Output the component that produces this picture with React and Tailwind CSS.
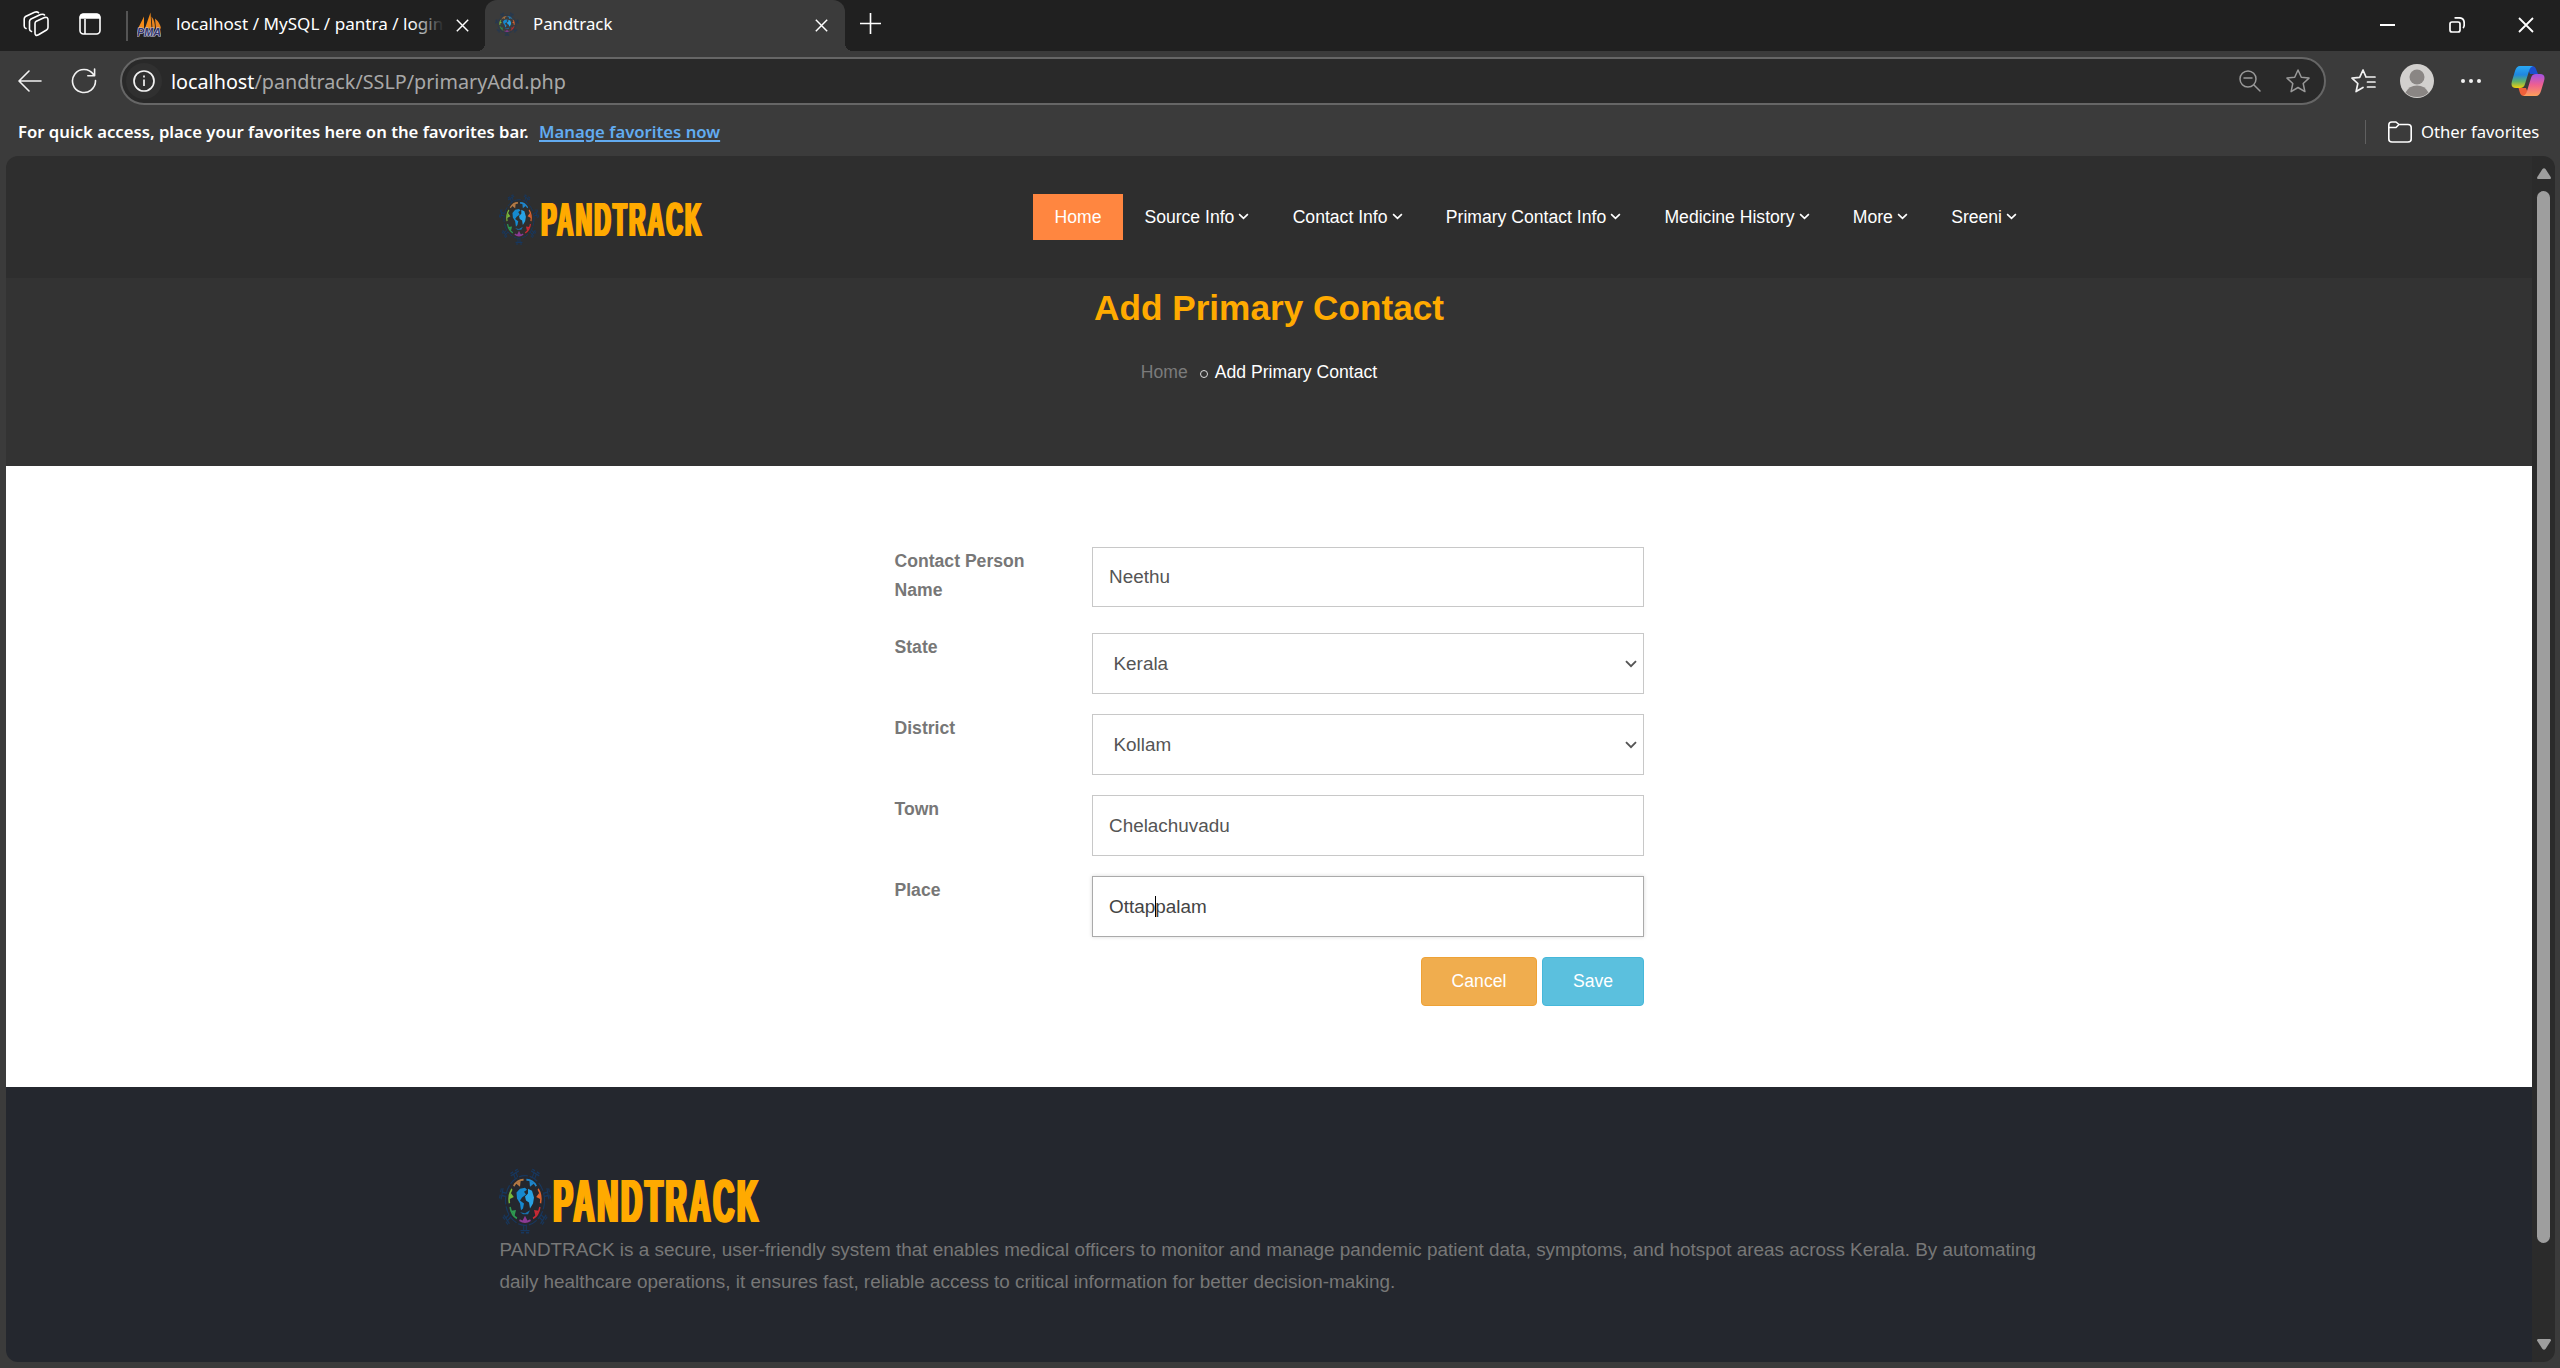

const segments = [
  [180, "#8d3a95"],
  [128.6, "#c92a35"],
  [77.1, "#e0632f"],
  [25.7, "#1f86cc"],
  [-25.7, "#b47a45"],
  [-77.1, "#79b93c"],
  [-128.6, "#2e9a50"],
];

function Virus({ className }) {
  return (
    <svg viewBox="0 0 52 68" preserveAspectRatio="none" className={"shrink-0 " + className}>
      <g fill="none">
        {segments.map(([a]) => (
          <g key={a} transform={`translate(26 34) scale(1 1.3) rotate(${a})`} stroke="#17375e" strokeWidth="1.100">
            <path d="M-1.300 -19.500V-23M1.300 -19.500V-23M-4.500 -23.500H4.500M-4 -25.200H-1M1 -25.200H4" />
          </g>
        ))}
        <ellipse cx="26" cy="34" rx="19.500" ry="25.200" stroke="#17375e" strokeWidth="1.200" strokeDasharray="9 2" />
        {segments.map(([a, color]) => (
          <g key={a} transform={`translate(26 34) scale(1 1.35) rotate(${a})`}>
            <path d="M-5.500 -14.700Q0 -17.500 5.500 -14.700" stroke={color} strokeWidth="1.500" />
            <path d="M-2.600 -15.500L0 -11.500L2.600 -15.500Z" fill={color} />
          </g>
        ))}
      </g>
      <path d="M17.500 26L21 22L26 21L28 23L25 25L27 28L23 31L21 34L25 37L24 42L22 44L21 37L18 32Z" fill="#1689cf" />
      <path d="M29 22L33 24L35 31L34 37L31 42L30 36L27 34L26 30L29 27Z" fill="#28a2e4" />
      <path d="M21 46L26 47L31 44L29 48H24Z" fill="#176fae" />
    </svg>
  );
}

function Chevron({ className }) {
  return (
    <svg viewBox="0 0 12 8" className={className} fill="none" stroke="currentColor" strokeWidth="1.900"><path d="M1 1.200L6 6.200L11 1.200" /></svg>
  );
}

function X({ className }) {
  return (
    <svg viewBox="0 0 16 16" className={className} fill="none" stroke="currentColor" strokeWidth="1.800"><path d="M1 1L15 15M15 1L1 15" /></svg>
  );
}

function TabBar() {
  return (
    <div className="flex h-[51px] bg-[#202020] font-['Noto_Sans',sans-serif] text-white">
      <div className="flex w-[485px] items-center pb-[3px]">
        <svg viewBox="0 0 26 26" className="ml-[23px] h-[26px] w-[26px]" fill="none" stroke="currentColor" strokeWidth="1.600" strokeLinejoin="round" strokeLinecap="round">
          <path d="M12 12.500Q12 11 13.300 10.300L21.500 6.600Q25 5.500 25 9V16.500Q25 18 23.500 19L15.500 23.800Q12 25.500 12 22Z" />
          <path d="M8.500 20.500Q6.500 20 6.500 18V10.500Q6.500 9 8 8L17.500 3.600Q20.500 2.600 21.500 4" />
          <path d="M3 17.500Q1.200 17 1.200 15V8Q1.200 6.500 2.500 5.500L11.500 1.200Q14 .3 15.500 1.700" />
        </svg>
        <svg viewBox="0 0 22 22" className="ml-[30px] h-[22px] w-[22px]" fill="none" stroke="currentColor" strokeWidth="1.600">
          <rect x="1" y="1" width="20" height="20" rx="3.500" />
          <path d="M1.500 4Q1.500 1.500 4 1.500H18Q20.500 1.500 20.500 4V5H1.500Z" fill="currentColor" />
          <path d="M6 6V21" />
        </svg>
        <div className="mt-[4px] ml-[25px] h-[30px] w-[2px] bg-[#545454]" />
        <svg viewBox="0 0 24 24" className="ml-[9px] h-[25px] w-[24px]">
          <path d="M1 16L7 4V16ZM8 16Q11 7 13.500 0L14.500 16Z" fill="#f58b19" />
          <path d="M14.500 4Q18 8 18 16H15.500ZM18 6Q23 10 24 16H19Z" fill="#e88420" />
          <text x="0" y="23.500" textLength="24" lengthAdjust="spacingAndGlyphs" fontSize="10" fontWeight="700" fontStyle="italic" fontFamily="Liberation Sans" fill="#34366e" stroke="#c5c6dc" strokeWidth="1.200" paintOrder="stroke">PMA</text>
        </svg>
        <div className="relative -mt-px ml-[15px] w-[268px] overflow-hidden text-[17.1px] leading-[27px] whitespace-nowrap">
          localhost / MySQL / pantra / login
          <div className="absolute top-0 right-0 h-full w-8 bg-linear-to-r from-transparent to-[#202020]" />
        </div>
        <X className="mt-[3px] ml-[12px] h-[13px] w-[13px]" />
      </div>
      <div className="relative flex h-[51px] w-[360px] items-center rounded-t-[12px] bg-[#3b3b3b] pb-[3px] before:absolute before:bottom-0 before:-left-2 before:h-2 before:w-2 before:bg-[radial-gradient(circle_at_0_0,transparent_8px,#3b3b3b_8px)] after:absolute after:-right-2 after:bottom-0 after:h-2 after:w-2 after:bg-[radial-gradient(circle_at_100%_0,transparent_8px,#3b3b3b_8px)]">
        <Virus className="ml-[10px] h-[24px] w-[24px]" />
        <div className="-mt-px ml-[14px] w-[79px] text-[16.8px] leading-[27px]">Pandtrack</div>
        <X className="mt-[2px] ml-[203px] h-[13px] w-[13px]" />
      </div>
      <svg viewBox="0 0 22 22" className="mt-[13px] ml-[15px] h-[21px] w-[21px]" stroke="currentColor" strokeWidth="1.700"><path d="M11 0V22M0 11H22" /></svg>
      <div className="mr-[26px] ml-auto flex items-center pb-px">
        <div className="mr-[54px] h-[2px] w-[15px] bg-white" />
        <svg viewBox="0 0 16 16" className="mr-[53px] h-[16px] w-[16px]" fill="none" stroke="currentColor" strokeWidth="1.700"><rect x="1" y="5" width="10" height="10" rx="2" /><path d="M5.500 1Q6.500 .8 8 .8H10Q15.200 .8 15.200 6V8Q15.200 10 14 11" /></svg>
        <X className="h-[16px] w-[16px]" />
      </div>
    </div>
  );
}

function Toolbar() {
  return (
    <div className="flex h-[59px] items-center bg-[#3b3b3b] pt-px text-[#f2f2f2]">
      <svg viewBox="0 0 24 22" className="ml-[18px] h-[22px] w-[24px]" fill="none" stroke="currentColor" strokeWidth="1.600" strokeLinecap="round" strokeLinejoin="round"><path d="M23 11H1.500M11 1L1 11L11 21" /></svg>
      <svg viewBox="0 0 26 26" className="ml-[29px] h-[26px] w-[26px]" fill="none" stroke="currentColor" strokeWidth="1.600" strokeLinecap="round" strokeLinejoin="round"><path d="M24.500 12.500A11.500 11.500 0 1 1 22.500 6.500M23.600 1V7.800H16.800" /></svg>
      <div className="ml-[23px] flex h-[48px] w-[2206px] items-center rounded-full border-2 border-[#666] bg-[#292929]">
        <div className="ml-[4px] flex h-[36px] w-[36px] items-center justify-center rounded-full bg-[#303030]">
          <svg viewBox="0 0 22 22" className="h-[22px] w-[22px]" fill="none" stroke="currentColor" strokeWidth="1.700"><circle cx="11" cy="11" r="10" /><path d="M11 9.500V16M11 5.500V7.500" /></svg>
        </div>
        <div className="ml-[9px] flex pt-px font-['Noto_Sans',sans-serif] text-[19.75px] text-white">
          <span>localhost</span>
          <span className="text-[#a8a8a8]">/pandtrack/SSLP/primaryAdd.php</span>
        </div>
        <svg viewBox="0 0 22 22" className="ml-auto h-[22px] w-[22px] text-[#999]" fill="none" stroke="currentColor" strokeWidth="1.500" strokeLinecap="round"><circle cx="9" cy="9" r="8" /><path d="M15 15L21 21M5 8H13" /></svg>
        <svg viewBox="0 0 24 24" className="mr-[14px] ml-[25px] h-[24px] w-[24px] text-[#999]" fill="none" stroke="currentColor" strokeWidth="1.500" strokeLinejoin="round"><path d="M12 1L15.300 8.300L23 9.100L17.200 14.500L18.900 22.600L12 18.500L5.100 22.600L6.800 14.500L1 9.100L8.700 8.300Z" /></svg>
      </div>
      <svg viewBox="0 0 25 24" className="ml-[25px] h-[24px] w-[25px]" fill="none" stroke="currentColor" strokeWidth="1.700" strokeLinejoin="round" strokeLinecap="round"><path d="M15 8L12 1L8.700 8.300L1 9.100L6.800 14.500L5.100 22.600L12 18.500M15 8H24M16.500 13H24M16.500 18H24" /></svg>
      <svg viewBox="0 0 34 34" className="mb-px ml-[24px] h-[34px] w-[34px]"><circle cx="17" cy="17" r="17" fill="#d2d0ce" /><circle cx="17" cy="13" r="7.500" fill="#8a8684" /><path d="M5.500 28.500Q9 21.500 17 21.500T28.500 28.500Q24 33 17 33T5.500 28.500Z" fill="#8a8684" /></svg>
      <svg viewBox="0 0 20 4" className="ml-[27px] h-[4px] w-[20px]" fill="currentColor"><circle cx="2" cy="2" r="2" /><circle cx="10" cy="2" r="2" /><circle cx="18" cy="2" r="2" /></svg>
      <svg viewBox="0 0 34 32" className="mb-px ml-[30px] h-[32px] w-[34px]">
        <defs>
          <linearGradient id="ca" x1="0" y1="0" x2="0" y2="1"><stop offset="0" stopColor="#2aa9f5" /><stop offset=".4" stopColor="#1f87e0" /><stop offset=".7" stopColor="#5fb06a" /><stop offset="1" stopColor="#f2d00c" /></linearGradient>
          <linearGradient id="cb" x1="0" y1="0" x2="0" y2="1"><stop offset="0" stopColor="#a251e5" /><stop offset=".5" stopColor="#f0608f" /><stop offset="1" stopColor="#fda05a" /></linearGradient>
        </defs>
        <path d="M16 1H21Q24 1 25 4L27 9H19Z" fill="#1c50cf" />
        <path d="M18 31H13Q10 31 9 28L7.500 23H15Z" fill="#f0603a" />
        <path d="M9 1H22Q19 2 18 6L14 19Q13 23 9 23H5Q-1 23 1 16L4 6Q5.500 1 9 1Z" fill="url(#ca)" />
        <path d="M25 31H12Q15 30 16 26L20 13Q21 9 25 9H29Q35 9 33 16L30 26Q28.500 31 25 31Z" fill="url(#cb)" />
      </svg>
    </div>
  );
}

function FavoritesBar() {
  return (
    <div className="flex h-[46px] items-center bg-[#3b3b3b] pb-[2px] font-['Noto_Sans',sans-serif] text-[16.7px] leading-[24px] whitespace-nowrap text-white">
      <div className="-mt-px ml-[18px] w-[511px] font-semibold">For quick access, place your favorites here on the favorites bar.</div>
      <div className="-mt-px ml-[10px] font-semibold text-[#62abf0] underline decoration-2 underline-offset-2">Manage favorites now</div>
      <div className="ml-auto h-[24px] w-px bg-[#606060]" />
      <svg viewBox="0 0 24 22" className="ml-[22px] h-[22px] w-[24px]" fill="none" stroke="currentColor" strokeWidth="1.600" strokeLinejoin="round"><path d="M.8 4Q.8 1 3.800 1H8L11 3.500H20Q23.200 3.500 23.200 6.500V18Q23.200 21 20 21H4Q.8 21 .8 18ZM.8 6.500H8L11 3.500" /></svg>
      <div className="-mt-px mr-[21px] ml-[9px] w-[118px]">Other favorites</div>
    </div>
  );
}

const nav = ["Source Info", "Contact Info", "Primary Contact Info", "Medicine History", "More", "Sreeni"];

function Header() {
  return (
    <div className="flex h-[122px] items-start bg-[#2e2e2e] text-white">
      <Virus className="mt-[37px] ml-[493px] h-[52px] w-[40px]" />
      <div className="mt-[40px] ml-[2px] h-[48px] w-[161px] shrink-0 font-['Liberation_Sans',sans-serif] text-[48px] leading-[48px] font-bold text-[#ffaa00]">
        <span className="inline-block origin-left scale-x-[0.47] tracking-[5px] whitespace-nowrap [text-shadow:3.500px_0_#ffaa00,-2px_0_#ffaa00,1.500px_0_#ffaa00]">PANDTRACK</span>
      </div>
      <div className="mt-[38px] ml-[331px] flex h-[46px] items-center font-['Liberation_Sans',sans-serif] text-[17.6px] whitespace-nowrap">
        <div className="flex h-full w-[90px] items-center justify-center bg-[#ff8640]">Home</div>
        {nav.map((label) => (
          <div key={label} className="flex items-center pr-[21.900px] pl-[21.400px]">
            {label}
            <Chevron className="ml-[4px] h-[7px] w-[11px]" />
          </div>
        ))}
      </div>
    </div>
  );
}

function Hero() {
  return (
    <div className="flex h-[188px] flex-col items-center bg-[#333333] pt-[3px] font-['Liberation_Sans',sans-serif]">
      <h1 className="text-[35.2px] leading-[53px] font-bold text-[#ffaa00]">Add Primary Contact</h1>
      <div className="mt-[26px] flex items-center pr-[20px] text-[17.6px] leading-[24px] text-white">
        <span className="text-[#7b7b7b]">Home</span>
        <span className="mt-[4px] mr-[7px] ml-[12px] h-[8px] w-[8px] rounded-full border border-[#ddd]" />
        <span>Add Primary Contact</span>
      </div>
    </div>
  );
}

function Field({ label, value, select, focus, tall }) {
  return (
    <div className={"flex items-start " + (tall ? "h-[86px]" : "h-[81px]")}>
      <div className="w-[198px] pr-[50px] pl-[0.500px] text-[17.6px] leading-[29px] font-bold text-[#777]">{label}</div>
      <div className={"flex w-[552px] items-center border bg-white text-[18.9px] " + (tall ? "h-[60px] " : "h-[61px] pt-px ") + (focus ? "border-[#aaa] text-[#444] shadow-[0_0_4px_rgba(0,0,0,0.15)] " : "border-[#c8c8c8] text-[#555] ") + (select ? "pl-[20.500px]" : "pl-[16px]")}>
        <div className="relative">
          {value}
          {focus && <div className="absolute top-[3px] left-[46px] h-[21px] w-px bg-black" />}
        </div>
        {select && <Chevron className="mr-[6px] ml-auto h-[8px] w-[12px]" />}
      </div>
    </div>
  );
}

function Form() {
  return (
    <div className="flex h-[621px] justify-center bg-white pt-[81px] font-['Liberation_Sans',sans-serif]">
      <div className="w-[750px]">
        <Field tall label="Contact Person Name" value="Neethu" />
        <Field label="State" value="Kerala" select />
        <Field label="District" value="Kollam" select />
        <Field label="Town" value="Chelachuvadu" />
        <Field label="Place" value="Ottappalam" focus />
        <div className="flex justify-end gap-[5px] text-[17.6px] text-white">
          <button className="h-[49px] w-[116px] rounded-[4px] border border-[#eea236] bg-[#f0ad4e]">Cancel</button>
          <button className="h-[49px] w-[102px] rounded-[4px] border border-[#46b8da] bg-[#5bc0de]">Save</button>
        </div>
      </div>
    </div>
  );
}

function Footer() {
  return (
    <div className="h-[275px] bg-[#24272e] pl-[493px] font-['Liberation_Sans',sans-serif]">
      <div className="flex h-[147px] items-start pt-[80px]">
        <Virus className="h-[67px] w-[52px]" />
        <div className="mt-[4px] ml-[2px] h-[60px] w-[207px] shrink-0 text-[60.5px] leading-[60px] font-bold text-[#ffaa00]">
          <span className="inline-block origin-left scale-x-[0.475] tracking-[6.500px] whitespace-nowrap [text-shadow:4.500px_0_#ffaa00,-2.500px_0_#ffaa00,2px_0_#ffaa00]">PANDTRACK</span>
        </div>
      </div>
      <p className="w-[1560px] pl-[0.500px] text-[18.9px] leading-[32px] text-[#777]">
        PANDTRACK is a secure, user-friendly system that enables medical officers to monitor and manage pandemic patient data, symptoms, and hotspot areas across Kerala. By automating
        <br />
        daily healthcare operations, it ensures fast, reliable access to critical information for better decision-making.
      </p>
    </div>
  );
}

export default function App() {
  return (
    <div className="h-[1368px] w-[2560px] overflow-hidden bg-[#3b3b3b]">
      <TabBar />
      <Toolbar />
      <FavoritesBar />
      <div className="ml-[6px] flex h-[1206px] w-[2549px] overflow-hidden rounded-[12px]">
        <div className="w-[2526px]">
          <Header />
          <Hero />
          <Form />
          <Footer />
        </div>
        <div className="flex flex-1 flex-col items-center bg-[#2b2b2b]">
          <svg viewBox="0 0 14 11" className="mt-[12px] h-[11px] w-[14px]" fill="#9e9e9e"><path d="M5.500 1Q7 -.5 8.500 1L14 9.500Q14 11 13 11H1Q0 11 0 9.500Z" /></svg>
          <div className="mt-[12px] h-[1052px] w-[13px] rounded-full bg-[#9e9e9e]" />
          <svg viewBox="0 0 14 11" className="mt-[96px] h-[11px] w-[14px] rotate-180" fill="#9e9e9e"><path d="M5.500 1Q7 -.5 8.500 1L14 9.500Q14 11 13 11H1Q0 11 0 9.500Z" /></svg>
        </div>
      </div>
    </div>
  );
}
